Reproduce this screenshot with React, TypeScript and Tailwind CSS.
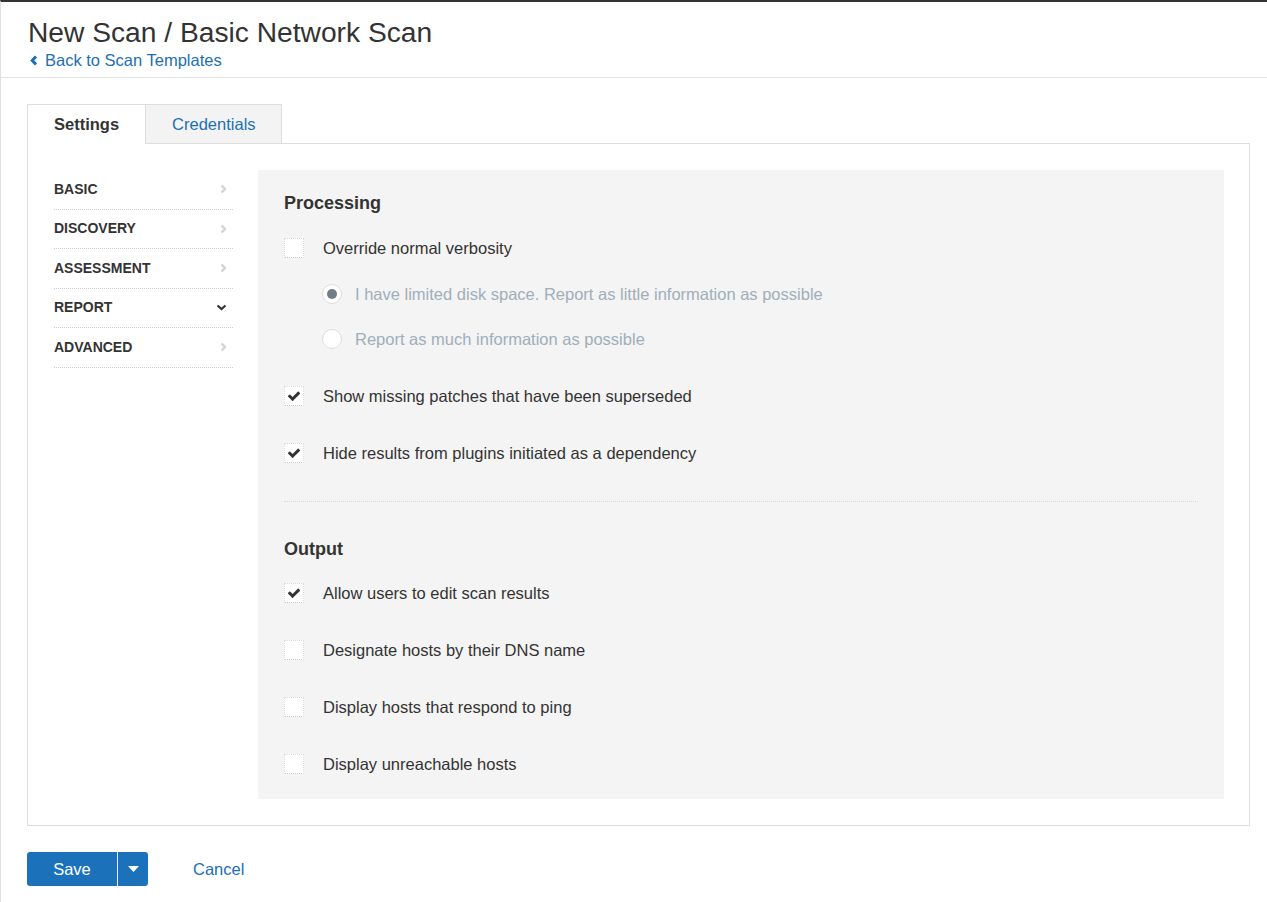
import React from "react";

const font = { fontFamily: '"Liberation Sans", Arial, Helvetica, sans-serif' };

function Check() {
  return (
    <svg width="14" height="14" viewBox="0 0 1792 1792" className="block">
      <path
        fill="#333333"
        d="M1671 566q0 40-28 68l-724 724-136 136q-28 28-68 28t-68-28l-136-136-362-362q-28-28-28-68t28-68l136-136q28-28 68-28t68 28l294 295 656-657q28-28 68-28t68 28l136 136q28 28 28 68z"
      />
    </svg>
  );
}

function Checkbox({ checked, label, className = "" }: { checked?: boolean; label: string; className?: string }) {
  return (
    <div className={`flex items-center h-5 ${className}`}>
      <div className="w-5 h-5 bg-white border border-[#dcdcdc] border-b-[#c8c8c8] border-dotted flex items-center justify-center shrink-0">
        {checked && <Check />}
      </div>
      <span className="ml-[19px] text-[16.5px] leading-5 text-[#333]">{label}</span>
    </div>
  );
}

function Radio({ selected, label, className = "" }: { selected?: boolean; label: string; className?: string }) {
  return (
    <div className={`flex items-center h-5 ml-[38px] ${className}`}>
      <div className="w-5 h-5 rounded-full bg-white border border-[#dcdcdc] flex items-center justify-center shrink-0">
        {selected && <div className="w-[10px] h-[10px] rounded-full bg-[#717c88]" />}
      </div>
      <span className="ml-[13px] text-[16.5px] leading-5 text-[#a0aebb]">{label}</span>
    </div>
  );
}

function ChevronRight() {
  return (
    <svg width="7" height="10" viewBox="0 0 7 10" className="block">
      <polyline points="1.5,1.5 5,5 1.5,8.5" fill="none" stroke="#d2d2d2" strokeWidth="2.2" />
    </svg>
  );
}

function ChevronDown() {
  return (
    <svg width="11" height="7" viewBox="0 0 11 7" className="block">
      <polyline points="1.5,1.5 5.5,5 9.5,1.5" fill="none" stroke="#333" strokeWidth="2.2" />
    </svg>
  );
}

const navItems = [
  { label: "BASIC", open: false },
  { label: "DISCOVERY", open: false },
  { label: "ASSESSMENT", open: false },
  { label: "REPORT", open: true },
  { label: "ADVANCED", open: false },
];

export default function App() {
  return (
    <div
      style={font}
      className="min-h-[902px] bg-white border-t-2 border-t-[#333] border-l border-l-[#e0e0e0] text-[#333]"
    >
      {/* Header */}
      <div className="border-b border-[#e3e3e3] pl-[27px] pt-[14px] pb-[7px]">
        <h1 className="text-[28.2px] leading-8 text-[#333]">New Scan / Basic Network Scan</h1>
        <a className="mt-[2px] flex items-center h-5 text-[16.5px] leading-5 text-[#1d6fb3] cursor-pointer">
          <svg width="8" height="11" viewBox="0 0 8 11" className="ml-[2px] mr-[7px]">
            <polyline points="6,1.5 2.2,5.5 6,9.5" fill="none" stroke="#1d6fb3" strokeWidth="3" />
          </svg>
          Back to Scan Templates
        </a>
      </div>

      {/* Tabs + box */}
      <div className="ml-[26px] mr-[17px] mt-[26px]">
        <div className="flex items-start">
          <div className="relative z-10 -mb-px h-10 px-[26px] bg-white border-l border-t border-r border-[#dddddd] flex items-center text-[16.5px] font-bold text-[#333]">
            Settings
          </div>
          <div className="h-[39px] pl-[26px] pr-[25px] bg-[#f3f3f3] border-t border-r border-[#dddddd] flex items-center text-[16.5px] text-[#1d6fb3]">
            Credentials
          </div>
        </div>

        <div className="border border-[#dddddd] bg-white pt-[26px] pb-[26px] pl-[26px] pr-[25px] flex gap-[25px]">
          {/* Sidebar */}
          <div className="w-[179px] shrink-0">
            {navItems.map((it) => (
              <div
                key={it.label}
                className="h-[39.5px] border-b border-dotted border-[#cccccc] flex items-center justify-between pr-[6px]"
              >
                <span className="text-[14px] font-bold text-[#333]">{it.label}</span>
                {it.open ? <ChevronDown /> : <ChevronRight />}
              </div>
            ))}
          </div>

          {/* Panel */}
          <div className="flex-1 bg-[#f4f4f4] pl-[26px] pr-[26px] pt-[21px] pb-[25px] flex flex-col">
            <h3 className="text-[18px] leading-6 font-bold text-[#333]">Processing</h3>
            <Checkbox className="mt-[23px]" label="Override normal verbosity" />
            <Radio className="mt-[26px]" selected label="I have limited disk space. Report as little information as possible" />
            <Radio className="mt-[25px]" label="Report as much information as possible" />
            <Checkbox className="mt-[37px]" checked label="Show missing patches that have been superseded" />
            <Checkbox className="mt-[37px]" checked label="Hide results from plugins initiated as a dependency" />
            <div className="mt-[38px] border-t border-dotted border-[#d8d8d8]" />
            <h3 className="mt-[35px] text-[18px] leading-6 font-bold text-[#333]">Output</h3>
            <Checkbox className="mt-[22px]" checked label="Allow users to edit scan results" />
            <Checkbox className="mt-[37px]" label="Designate hosts by their DNS name" />
            <Checkbox className="mt-[37px]" label="Display hosts that respond to ping" />
            <Checkbox className="mt-[37px]" label="Display unreachable hosts" />
          </div>
        </div>

        {/* Buttons */}
        <div className="mt-[26px] flex items-center">
          <div className="flex h-[34px] rounded-[3px] overflow-hidden bg-[#1b72ba]">
            <button className="w-[90px] text-white text-[16.5px] flex items-center justify-center">Save</button>
            <div className="w-px bg-[#e8f0f8]" />
            <button className="w-[30px] flex items-center justify-center">
              <svg width="11" height="6" viewBox="0 0 11 6">
                <polygon points="0,0 11,0 5.5,6" fill="#ffffff" />
              </svg>
            </button>
          </div>
          <a className="ml-[45px] text-[16.5px] text-[#1d6fb3] cursor-pointer">Cancel</a>
        </div>
      </div>
    </div>
  );
}
